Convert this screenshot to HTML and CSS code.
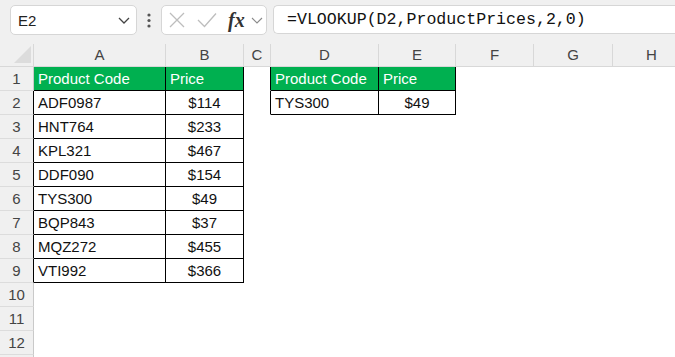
FILE: index.html
```html
<!DOCTYPE html>
<html>
<head>
	<title>VLOOKUP</title>
	<meta charset="utf-8">
	<link rel="stylesheet" href="styles.css">
</head>
<body>
<div class="bar">
	<div class="namebox">
		<span>E2</span>
		<svg width="12" height="7" viewBox="0 0 12 7"><path d="M1 1L6 6L11 1" fill="none" stroke="#444" stroke-width="1.3"/></svg>
	</div>
	<svg class="dots" width="4" height="15" viewBox="0 0 4 15"><circle cx="2" cy="2" r="1.6" fill="#555"/><circle cx="2" cy="7.5" r="1.6" fill="#555"/><circle cx="2" cy="13" r="1.6" fill="#555"/></svg>
	<div class="fxbox">
		<svg width="16" height="16" viewBox="0 0 16 16"><path d="M1 1L15 15M15 1L1 15" fill="none" stroke="#bdbdbd" stroke-width="1.3"/></svg>
		<svg class="ok" width="20" height="16" viewBox="0 0 20 16"><path d="M1 8L7.5 14.5L19 1.5" fill="none" stroke="#bdbdbd" stroke-width="1.3"/></svg>
		<span class="fx">fx</span>
		<svg width="12" height="7" viewBox="0 0 12 7"><path d="M1 1L6 6L11 1" fill="none" stroke="#8a8a8a" stroke-width="1.1"/></svg>
	</div>
	<div class="formula">=VLOOKUP(D2,ProductPrices,2,0)</div>
</div>

<div class="cols colhead">
	<div class="corner"></div>
	<div>A</div><div>B</div><div>C</div><div>D</div><div>E</div><div>F</div><div>G</div><div>H</div>
</div>

<div class="cols grid">
	<div class="rh">1</div>
	<div class="c b g">Product Code</div><div class="c b g">Price</div><div class="c r"></div><div class="c b g">Product Code</div><div class="c b g">Price</div><div class="c"></div><div class="c"></div><div class="c"></div>

	<div class="rh edge">2</div>
	<div class="c b">ADF0987</div><div class="c b n">$114</div><div class="c r"></div><div class="c b">TYS300</div><div class="c b n">$49</div><div class="c"></div><div class="c"></div><div class="c"></div>

	<div class="rh edge">3</div>
	<div class="c b">HNT764</div><div class="c b n">$233</div><div class="c"></div><div class="c"></div><div class="c"></div><div class="c"></div><div class="c"></div><div class="c"></div>

	<div class="rh edge">4</div>
	<div class="c b">KPL321</div><div class="c b n">$467</div><div class="c"></div><div class="c"></div><div class="c"></div><div class="c"></div><div class="c"></div><div class="c"></div>

	<div class="rh edge">5</div>
	<div class="c b">DDF090</div><div class="c b n">$154</div><div class="c"></div><div class="c"></div><div class="c"></div><div class="c"></div><div class="c"></div><div class="c"></div>

	<div class="rh edge">6</div>
	<div class="c b">TYS300</div><div class="c b n">$49</div><div class="c"></div><div class="c"></div><div class="c"></div><div class="c"></div><div class="c"></div><div class="c"></div>

	<div class="rh edge">7</div>
	<div class="c b">BQP843</div><div class="c b n">$37</div><div class="c"></div><div class="c"></div><div class="c"></div><div class="c"></div><div class="c"></div><div class="c"></div>

	<div class="rh edge">8</div>
	<div class="c b">MQZ272</div><div class="c b n">$455</div><div class="c"></div><div class="c"></div><div class="c"></div><div class="c"></div><div class="c"></div><div class="c"></div>

	<div class="rh edge">9</div>
	<div class="c b">VTI992</div><div class="c b n">$366</div><div class="c"></div><div class="c"></div><div class="c"></div><div class="c"></div><div class="c"></div><div class="c"></div>

	<div class="rh">10</div>
	<div class="c"></div><div class="c"></div><div class="c"></div><div class="c"></div><div class="c"></div><div class="c"></div><div class="c"></div><div class="c"></div>

	<div class="rh">11</div>
	<div class="c"></div><div class="c"></div><div class="c"></div><div class="c"></div><div class="c"></div><div class="c"></div><div class="c"></div><div class="c"></div>

	<div class="rh">12</div>
	<div class="c"></div><div class="c"></div><div class="c"></div><div class="c"></div><div class="c"></div><div class="c"></div><div class="c"></div><div class="c"></div>
</div>
<div class="tail"></div>
</body>
</html>
```

FILE: styles.css
```css
*{
	margin: 0;
	padding: 0;
	box-sizing: border-box;
}
html, body{
	width: 675px;
	height: 357px;
	overflow: hidden;
	background: #fff;
	font-family: "Liberation Sans", Arial, sans-serif;
	font-size: 15px;
	color: #111;
}
.bar{
	height: 40px;
	background: #f0f0f0;
	display: flex;
	align-items: flex-start;
	padding-top: 5px;
	padding-left: 10px;
}
.namebox{
	width: 127px;
	height: 30px;
	background: #fff;
	border: 1px solid #d6d6d6;
	border-radius: 5px;
	display: flex;
	align-items: center;
	justify-content: space-between;
	padding: 0 6px 0 7px;
	color: #222;
}
.dots{
	margin: 8px 10px 0 10px;
}
.fxbox{
	width: 106px;
	height: 30px;
	background: #fff;
	border: 1px solid #d6d6d6;
	border-radius: 5px;
	display: flex;
	align-items: center;
	padding-left: 7px;
}
.fxbox .ok{
	margin-left: 12px;
}
.fx{
	font-family: "Liberation Serif", "Times New Roman", serif;
	font-style: italic;
	font-weight: bold;
	font-size: 20px;
	color: #333;
	margin: 0 6px 0 11px;
	line-height: 20px;
}
.formula{
	flex: 1;
	margin-left: 6px;
	height: 29px;
	background: #fff;
	border: 1px solid #d6d6d6;
	border-right: none;
	border-radius: 5px 0 0 5px;
	padding-left: 13px;
	font-family: "Liberation Mono", "DejaVu Sans Mono", monospace;
	font-size: 16.6px;
	line-height: 27px;
	color: #111;
}
.cols{
	display: grid;
	grid-template-columns: 34px 132px 78px 27px 108px 77px 78px 79px 78px;
	width: 691px;
}
.colhead{
	background: #f0f0f0;
	padding-top: 4px;
	height: 27px;
}
.colhead div{
	height: 23px;
	border-right: 1px solid #d8d8d8;
	border-bottom: 1px solid #d8d8d8;
	text-align: center;
	line-height: 22px;
	color: #444;
}
.colhead .corner{
	position: relative;
}
.corner::after{
	content: "";
	position: absolute;
	left: 14px;
	top: 2px;
	width: 0;
	height: 0;
	border-left: 17px solid transparent;
	border-bottom: 17px solid #dcdcdc;
}
.grid{
	grid-auto-rows: 24px;
}
.rh{
	background: #f0f0f0;
	border-right: 1px solid #c9c9c9;
	border-bottom: 1px solid #dcdcdc;
	text-align: center;
	line-height: 23px;
	color: #444;
}
.rh.edge{
	border-right-color: #000;
}
.c{
	background: #fff;
	border-right: 1px solid #fff;
	border-bottom: 1px solid #fff;
	line-height: 23px;
	padding-left: 4px;
	white-space: nowrap;
	overflow: hidden;
}
.c.b{
	border-right-color: #000;
	border-bottom-color: #000;
}
.c.r{
	border-right-color: #000;
}
.c.g{
	background: #00b050;
	color: #fff;
}
.c.n{
	text-align: center;
	padding-left: 0;
}
.tail{
	width: 34px;
	height: 3px;
	background: #f0f0f0;
	border-right: 1px solid #c9c9c9;
}
```
